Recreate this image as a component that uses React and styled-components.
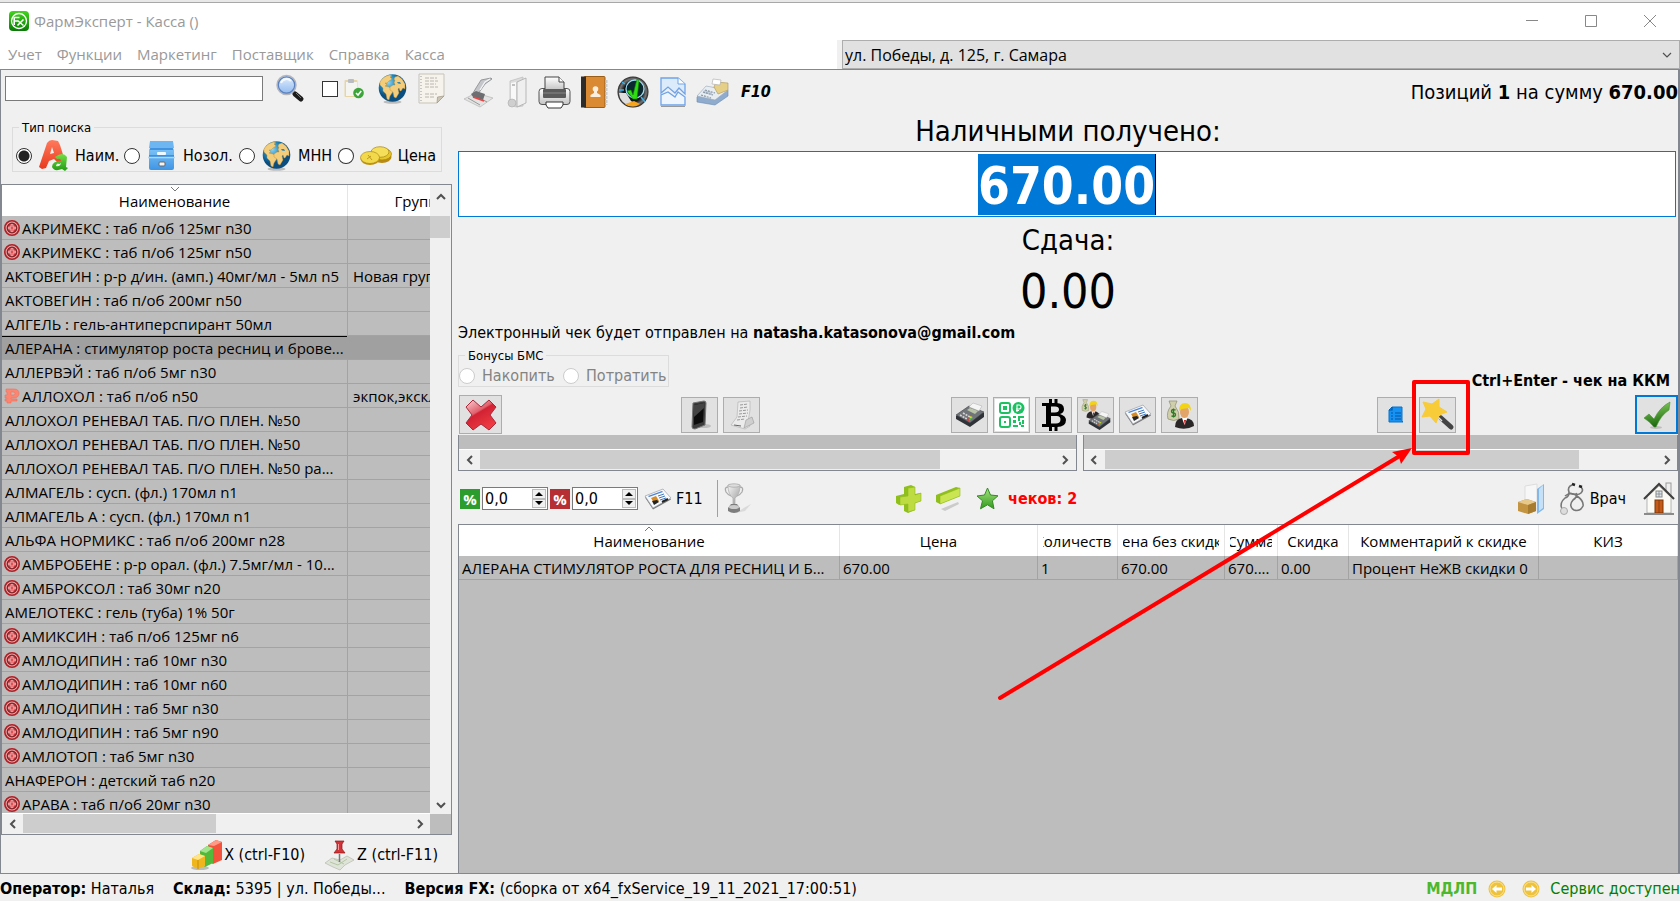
import React from 'react';
import styled, { createGlobalStyle } from 'styled-components';

const UI = '"Open Sans", "Noto Sans", sans-serif';
const TAHOMA = '"DejaVu Sans Condensed", "DejaVu Sans", sans-serif';

const GlobalStyle = createGlobalStyle`
  * { box-sizing: border-box; }
  body { margin: 0; background: #f0f0f0; color: #000; font: 15px/20px ${TAHOMA}; overflow: hidden; }
  button, input, select { font: inherit; color: inherit; margin: 0; }
  svg { display: block; flex: none; overflow: visible; }
`;

/* ---------- window ---------- */
const Window = styled.div`
  display: flex;
  flex-direction: column;
  height: 100vh;
  min-width: 1200px;
  border-top: 2px solid #e8e8e8;
`;
const TitleBar = styled.header`
  display: flex;
  align-items: center;
  height: 38px;
  flex: none;
  padding: 0 1px 2px 9px;
  background: #fff;
  border-top: 1px solid #a8a8a8;
  font: 15px/20px ${UI};
  color: #999;
`;
const Title = styled.h1`
  flex: 1;
  margin: 0 0 0 5px;
  font: inherit;
`;
const WinButton = styled.button`
  display: grid;
  place-items: center;
  width: 59px;
  height: 34px;
  padding: 0;
  border: 0;
  background: none;
`;
const MenuRow = styled.div`
  display: flex;
  flex: none;
  height: 30px;
  background: #fff;
  border-bottom: 1px solid #828790;
`;
const Menu = styled.nav`
  display: flex;
  align-items: center;
  width: 842px;
  padding: 0 0 2px 8px;
  gap: 15px;
`;
const MenuLink = styled.a`
  font: 15px/20px ${UI};
  color: #999;
  text-decoration: none;
`;
const AddressBox = styled.div`
  flex: 1;
  display: flex;
  align-items: center;
  padding-right: 6px;
  background: #e1e1e1;
  border: 1px solid #adadad;
  box-shadow: -5px 0 0 #f0f0f0;
`;
const AddressSelect = styled.select`
  flex: 1;
  padding: 0 2px;
  border: 0;
  appearance: none;
  background: none;
  font: 16px/20px ${UI};
`;
const Main = styled.main`
  flex: 1;
  min-height: 0;
  display: flex;
  border: 1px solid #828790;
  border-top: 0;
  border-right-width: 2px;
`;

/* ---------- left side ---------- */
const Side = styled.section`
  display: flex;
  flex-direction: column;
  width: 451px;
  flex: none;
`;
const SearchRow = styled.form`
  display: flex;
  align-items: center;
  height: 36px;
  padding: 1px 0 0 4px;
  flex: none;
`;
const SearchInput = styled.input`
  width: 258px;
  height: 25px;
  margin-right: 12px;
  border: 1px solid #7a7a7a;
  background: #fff;
`;
const IconButton = styled.button`
  display: flex;
  align-items: center;
  gap: ${(p) => p.$gap || 0}px;
  padding: 0;
  margin-left: ${(p) => p.$left || 0}px;
  border: 0;
  background: none;
  color: #000;
`;
const CheckLabel = styled.label`
  display: flex;
  align-items: center;
  gap: 6px;
  margin: 0 14px 0 17px;
`;
const CheckBox = styled.input`
  appearance: none;
  width: 16px;
  height: 16px;
  border: 1px solid #333;
  background: #fff;
`;
const Group = styled.fieldset`
  display: flex;
  align-items: center;
  position: relative;
  min-width: 0;
  margin: 0;
  padding: 0;
  border: 1px solid #dcdcdc;
`;
const SearchGroup = styled(Group)`
  width: 430px;
  height: 45px;
  flex: none;
  margin: 21px 0 12px 11px;
  padding: 12px 0 0 3px;
`;
const Legend = styled.span`
  position: absolute;
  top: -8px;
  left: 6px;
  padding: 0 3px;
  background: #f0f0f0;
  font: 13px/16px ${TAHOMA};
`;
const Radio = styled.input`
  appearance: none;
  width: 16px;
  height: 16px;
  border: 1px solid #333;
  border-radius: 50%;
  background: #fff;
  &:checked { background: radial-gradient(circle, #222 0 5px, #fff 6px); }
  &:disabled { border-color: #ccc; }
`;
const RadioLabel = styled.label`
  display: flex;
  align-items: center;
  gap: ${(p) => p.$gap}px;
  width: ${(p) => p.$w}px;
  color: ${(p) => (p.$off ? '#838383' : '#000')};
  font: 16px/20px ${TAHOMA};
  white-space: nowrap;
`;
const ListFrame = styled.div`
  flex: 1;
  min-height: 0;
  display: grid;
  grid-template: minmax(0, 1fr) 20px / minmax(0, 1fr) 21px;
  border: 1px solid #828790;
  background: #bdbdbd;
`;
const Clip = styled.div`
  overflow: hidden;
  border-bottom: 1px solid #fff;
`;
const Table = styled.table`
  width: ${(p) => p.$w || '100%'};
  table-layout: fixed;
  border-collapse: separate;
  border-spacing: 0;
  font: 15px/20px ${UI};
`;
const HeadCell = styled.th`
  position: relative;
  height: 31px;
  padding: 1px 5px 0;
  border-right: 1px solid #e5e5e5;
  background: #fff;
  font-weight: 400;
`;
const HeadText = styled.span`
  display: flex;
  justify-content: center;
  overflow: hidden;
  white-space: nowrap;
`;
const SortMark = styled.svg`
  position: absolute;
  top: 1px;
  left: calc(50% - 5px);
`;
const Cell = styled.td`
  height: 24px;
  padding: 0 3px 0 ${(p) => p.$pad || 3}px;
  overflow: hidden;
  white-space: nowrap;
  text-overflow: ellipsis;
  border-right: 1px solid ${(p) => (p.$sel ? '#a0a0a0' : '#a3a3a3')};
  border-bottom: 1px solid #a3a3a3;
  background: ${(p) => (p.$sel ? '#a0a0a0' : '#bdbdbd')};
  box-shadow: ${(p) => (p.$line ? 'inset 0 1px 0 #000' : 'none')};
  svg { display: inline-block; vertical-align: -2px; margin: 0 2px 0 -1px; }
`;
const Bar = styled.div`
  display: flex;
  flex-direction: ${(p) => (p.$v ? 'column' : 'row')};
  background: #f0f0f0;
`;
const BarArrow = styled.button`
  display: grid;
  place-items: center;
  flex: none;
  width: 21px;
  height: ${(p) => (p.$tall ? 31 : 19)}px;
  padding: 0 0 ${(p) => (p.$tall ? 8 : 0)}px;
  border: 0;
  background: none;
`;
const Track = styled.div`
  flex: 1;
`;
const Thumb = styled.div`
  width: ${(p) => p.$w};
  height: ${(p) => p.$h};
  background: #cdcdcd;
`;
const SideFooter = styled.div`
  display: flex;
  justify-content: flex-end;
  align-items: center;
  flex: none;
  height: 38px;
  padding: 2px 14px 0 0;
  gap: 19px;
  font: 16px/20px ${TAHOMA};
`;

/* ---------- right side ---------- */
const Work = styled.section`
  flex: 1;
  min-width: 0;
  display: flex;
  flex-direction: column;
  padding-left: 6px;
`;
const Tools = styled.div`
  display: flex;
  align-items: center;
  height: 44px;
  flex: none;
  padding-left: 5px;
`;
const Tool = styled(IconButton)`
  width: ${(p) => p.$w}px;
  height: 36px;
  flex: none;
`;
const F10 = styled.button`
  padding: 0;
  border: 0;
  background: none;
  font: italic bold 16px/20px ${TAHOMA};
`;
const Total = styled.p`
  margin: 0 0 0 auto;
  font: 20px/24px ${TAHOMA};
`;
const CashLabel = styled.label`
  display: block;
  margin: 0 0 3px;
  text-align: center;
  font: 29px/34px ${TAHOMA};
`;
const CashField = styled.div`
  display: flex;
  justify-content: center;
  align-items: center;
  height: 66px;
  flex: none;
  margin-right: 2px;
  border: 1px solid #0078d7;
  background: #fff;
`;
const CashInput = styled.input`
  width: 178px;
  height: 61px;
  padding: 4px 0 0;
  border: 0;
  border-right: 1px solid #000;
  outline: 0;
  background: #0078d7;
  color: #fff;
  text-align: center;
  font: bold 51px/56px ${TAHOMA};
`;
const ChangeLabel = styled.p`
  margin: 6px 0 4px;
  text-align: center;
  font: 29px/34px ${TAHOMA};
`;
const ChangeValue = styled.output`
  display: block;
  text-align: center;
  font: 48px/60px ${TAHOMA};
`;
const ReceiptNote = styled.p`
  margin: 2px 0 12px;
  font: 16px/20px ${TAHOMA};
`;
const BonusRow = styled.div`
  display: flex;
  justify-content: space-between;
  height: 36px;
  flex: none;
`;
const BonusGroup = styled(Group)`
  width: 211px;
  height: 32px;
  padding: 10px 0 0;
`;
const Hint = styled.strong`
  align-self: flex-end;
  margin-right: 8px;
  font: bold 16px/20px ${TAHOMA};
`;
const ActionRow = styled.div`
  display: flex;
  align-items: center;
  flex: none;
  height: 44px;
  padding: 3px 0 0 1px;
`;
const ActionSet = styled.div`
  display: flex;
  gap: 5px;
  margin-left: ${(p) => p.$left};
`;
const Action = styled.button`
  display: grid;
  place-items: center;
  position: relative;
  flex: none;
  width: ${(p) => (p.$big ? 43 : 37)}px;
  height: ${(p) => (p.$big ? 39 : 36)}px;
  padding: 0;
  border: ${(p) => (p.$main ? '2px solid #0078d7' : '1px solid #adadad')};
  background: ${(p) => (p.$white ? '#fff' : '#e1e1e1')};
  box-shadow: ${(p) => (p.$white ? 'inset 0 0 0 1px #e1e1e1' : 'none')};
`;
const Callout = styled.svg`
  position: absolute;
  z-index: 2;
  top: -18px;
  left: -8px;
  pointer-events: none;
`;
const Scrolls = styled.div`
  display: grid;
  grid-template-columns: 620fr 596fr;
  gap: 6px;
  flex: none;
`;
const ScrollPane = styled.div`
  border: 1px solid #828790;
  border-top: 0;
  height: 36px;
  padding-top: 14px;
  background: #bdbdbd;
`;
const PaneBar = styled(Bar)`
  height: 21px;
  border-top: 1px solid #fff;
`;
const CheckTools = styled.div`
  display: flex;
  align-items: center;
  flex: none;
  height: 53px;
  padding: 2px 3px 0 2px;
  font: 16px/20px ${TAHOMA};
`;
const Percent = styled.label`
  display: grid;
  place-items: center;
  width: 20px;
  height: 20px;
  margin-right: 2px;
  background: ${(p) => p.$c};
  color: #fff;
  font: bold 15px/20px ${UI};
`;
const Spin = styled.div`
  display: flex;
  align-items: center;
  width: 66px;
  height: 23px;
  margin-right: 2px;
  padding: 0 1px 0 2px;
  border: 1px solid #7a7a7a;
  background: #fff;
`;
const SpinInput = styled.input`
  width: 47px;
  padding: 0;
  border: 0;
  background: none;
`;
const SpinKeys = styled.span`
  display: grid;
  width: 14px;
  height: 19px;
`;
const SpinKey = styled.button`
  display: grid;
  place-items: center;
  padding: 0;
  border: 1px solid #bbb;
  background: #f0f0f0;
`;
const Rule = styled.span`
  width: 1px;
  height: 37px;
  margin: 0 6px 0 14px;
  background: #a0a0a0;
`;
const Checks = styled.strong`
  margin-left: 9px;
  color: #f00;
  font: bold 16px/20px ${TAHOMA};
`;
const Pusher = styled.span`
  flex: ${(p) => p.$n};
`;
const CartFrame = styled.div`
  flex: 1;
  min-height: 0;
  overflow: hidden;
  border: 1px solid #828790;
  border-bottom: 0;
  border-right: 0;
  background: #bdbdbd;
`;
const Status = styled.footer`
  display: flex;
  align-items: center;
  flex: none;
  height: 27px;
  padding-top: 3px;
  font: 16px/20px ${TAHOMA};
  white-space: pre;
`;
const StatusItem = styled.span`
  margin-right: 19px;
`;
const StatusEnd = styled.span`
  display: flex;
  align-items: center;
  margin-left: auto;
  color: #008000;
`;
const Mdlp = styled.strong`
  margin-right: 11px;
  color: #4db82e;
`;
const Service = styled.span`
  margin-left: 10px;
`;

/* ---------- icons ---------- */
const Svg = ({ w = 32, h = 32, box = '0 0 32 32', children }) => (
  <svg width={w} height={h} viewBox={box} aria-hidden="true">{children}</svg>
);
const Grad = ({ id, a, b, x2 = 0, y2 = 1 }) => (
  <linearGradient id={id} x1="0" y1="0" x2={x2} y2={y2}><stop stopColor={a} /><stop offset="1" stopColor={b} /></linearGradient>
);
const Chevron = ({ dir, thin }) => {
  const d = { left: 'M8 2 4 6l4 4', right: 'M4 2l4 4-4 4', up: 'M2 8l4-4 4 4', down: 'M2 4l4 4 4-4' }[dir];
  return <Svg w={12} h={12} box="0 0 12 12"><path d={d} fill="none" stroke="#505050" strokeWidth={thin ? 1.2 : 2} /></Svg>;
};
const Logo = () => (
  <Svg w={20} h={20} box="0 0 20 20">
    <defs><Grad id="lg" a="#43d61c" b="#087a05" /></defs>
    <rect width="20" height="20" rx="4" fill="url(#lg)" />
    <circle cx="10" cy="10" r="7.5" fill="none" stroke="#fff" strokeWidth="1.3" />
    <path d="M5.2 14V6.5h5.3M5.2 10h3.6M8.5 9.5l6 5M14.5 8.5l-6 6" fill="none" stroke="#fff" strokeWidth="1.6" />
  </Svg>
);
const Magnifier = () => (
  <Svg w={30} h={30} box="0 0 30 30">
    <defs><Grad id="mg" a="#e4f0ff" b="#8db8ee" /></defs>
    <path d="m17 17 3 3" stroke="#999" strokeWidth="3" />
    <path d="m20 20 6 5" stroke="#1c1c1c" strokeWidth="5" strokeLinecap="round" />
    <path d="m21 19 5 5" stroke="#777" strokeWidth="1" />
    <circle cx="11.5" cy="11" r="9.5" fill="url(#mg)" stroke="#b4b6ba" strokeWidth="1.5" />
    <circle cx="11.5" cy="11" r="8.2" fill="none" stroke="#5a7fbd" strokeWidth="1.2" />
    <path d="M6 9a6 6 0 0 1 10-2" stroke="#fff" strokeWidth="2" fill="none" opacity=".8" />
  </Svg>
);
const ClipboardOk = () => (
  <Svg w={20} h={20} box="0 0 20 20">
    <rect x=".5" y="1" width="13" height="17" rx="1" fill="#e6d6a6" />
    <rect x="2" y="3" width="11" height="14" fill="#f4f4f1" />
    <rect x="4" y="0" width="6" height="4" rx="1" fill="#b9bcc0" />
    <circle cx="14.5" cy="14" r="5.3" fill="#3ba53a" />
    <path d="m12 14 2 2 3.200-4" fill="none" stroke="#fff" strokeWidth="1.6" />
  </Svg>
);
const Globe = ({ id }) => (
  <Svg w={29} h={30} box="0 0 29 30">
    <defs><radialGradient id={id} cx=".35" cy=".3"><stop stopColor="#8fd3f2" /><stop offset=".55" stopColor="#2389bd" /><stop offset="1" stopColor="#0b4f80" /></radialGradient></defs>
    <ellipse cx="14.5" cy="28" rx="9" ry="1.8" fill="#9a9a9a" opacity=".6" />
    <circle cx="14.5" cy="14" r="13.8" fill={`url(#${id})`} />
    <path d="M2 8C4 4 8 1.500 12 1l2 1-2 1 2 2-3 2-2 2h-2l2 2-2 1 4 1 3 2 2 1-2 3-2 3-1 4-2-1-1-5-3-3 0-3-3-3z" fill="#f3cd7c" stroke="#b98a2f" strokeWidth=".4" />
    <path d="m17 3 3-1 4 3 3 5 0 5-2-1-2 3-1 0-1-3-1 1 1 4-3 5-2-1-1-5-3-2 0-3 3-2 2 0-1-3 1-1-1-2z" fill="#f3cd7c" stroke="#b98a2f" strokeWidth=".4" />
    <path d="M19 8h3l1 2-3-.5z" fill="#2b86b5" />
  </Svg>
);
const Note = () => (
  <Svg w={27} h={31} box="0 0 27 31">
    <path d="M1 1h25v22l-7 7H1z" fill="#f6f3ec" stroke="#c6c3ba" />
    <path d="m19 30 .5-6 6.500-1z" fill="#cbc5b5" stroke="#a19a88" strokeWidth=".7" />
    <path d="M7 5h12M7 8h13M7 11h11M7 14h13M7 21h12M7 24h9" stroke="#b9b6ad" strokeWidth="1" strokeDasharray="4 1" />
    <path d="M3 3v25" stroke="#999" strokeDasharray="1 2" />
  </Svg>
);
const Scanner = () => (
  <Svg w={31} h={31} box="0 0 31 31">
    <path d="m1 22 12-6 17 5-13 9z" fill="#e3e3e3" stroke="#b5b5b5" strokeWidth=".7" />
    <path d="m5 21 12 7M11 18l13 7" stroke="#999" strokeWidth="1" />
    <path d="m15 17 7-10 7-5-1-1-10 2-5 8-3 5z" fill="#c4c6c9" stroke="#85888c" strokeWidth=".8" />
    <path d="m8 17 5-3 9 3-2 6-10-3z" fill="#6c6e72" />
    <path d="m10 20 11 4" stroke="#f04040" strokeWidth="1.5" />
    <path d="m17 13 5-8 5-3" stroke="#f5f5f5" strokeWidth="1.3" fill="none" />
  </Svg>
);
const SilverBox = () => (
  <Svg w={21} h={31} box="0 0 21 31">
    <path d="m4 4 13-4v29l-7 1-6-3z" fill="#dcdcdc" stroke="#bbb" strokeWidth=".7" />
    <path d="m11 5 9-4v25l-9 4z" fill="#efefef" stroke="#aaa" strokeWidth=".8" />
    <path d="m5 6 5-1v20l-5 2z" fill="#f8f8f8" />
    <path d="M6 8h3" stroke="#888" />
    <circle cx="6" cy="26" r="4" fill="#cfcfcf" stroke="#aaa" strokeWidth=".6" />
  </Svg>
);
const Printer = () => (
  <Svg w={33} h={33} box="0 0 33 33">
    <defs><Grad id="pr" a="#fff" b="#c4c4c4" /></defs>
    <rect x="1" y="12.5" width="31" height="16" rx="3" fill="url(#pr)" stroke="#555" />
    <path d="M7 14V1h14l5 5v8z" fill="url(#pr)" stroke="#444" />
    <path d="M21 1v5h5" fill="#fff" stroke="#444" />
    <rect x="5" y="13" width="23" height="9" rx="1" fill="#5b5b5b" />
    <path d="M5 17h23" stroke="#888" />
    <path d="M8 26h17v3l-2 3H10l-2-3z" fill="#fff" stroke="#333" />
  </Svg>
);
const Book = () => (
  <Svg w={28} h={32} box="0 0 28 32">
    <rect x="4" y=".5" width="21" height="31" rx="1" fill="#d98a33" stroke="#9a5d18" />
    <rect x="1" y=".5" width="5" height="31" fill="#2e2c2a" />
    <path d="M26.5 4v25" stroke="#c9c9c9" strokeWidth="2" strokeDasharray="3 1" />
    <circle cx="15.5" cy="13" r="2.8" fill="#fbeedd" />
    <path d="M10.5 21v-2l3.500-2v-2h3v2l3.500 2v2z" fill="#fbeedd" />
  </Svg>
);
const Orb = () => (
  <Svg w={32} h={32}>
    <defs><radialGradient id="ob"><stop stopColor="#123" /><stop offset=".6" stopColor="#0d1214" /><stop offset=".85" stopColor="#777" /><stop offset="1" stopColor="#222" /></radialGradient></defs>
    <circle cx="16" cy="16" r="15.5" fill="url(#ob)" />
    <path d="M2 17a14 14 0 0 0 12 13l5-2-5-3-5-8z" fill="#ddd" />
    <path d="M8 28q8 5 15 0l-6-3z" fill="#f7a51c" />
    <circle cx="18" cy="13" r="9" fill="#0b2830" stroke="#9fdcf3" strokeWidth="1.3" />
    <path d="m24 21 4 5M8 8 5 6M2 14h5" stroke="#39b3ef" strokeWidth="1.5" />
    <path d="m10 15 4-1 2 5 4-16 2 2-2 18h-4z" fill="#2fdc12" stroke="#0c8a06" strokeWidth=".6" />
  </Svg>
);
const TornPage = () => (
  <Svg w={26} h={30} box="0 0 26 30">
    <path d="M1 1h17l7 6v10l-6-6-4 5-7-6-7 6z" fill="#dcebfb" stroke="#6fa3e8" strokeWidth="1.3" />
    <path d="M1 28V18l7-3 7 5 3-5 7 5v8z" fill="#eef5fd" stroke="#6fa3e8" strokeWidth="1.3" />
    <path d="M1 29.500h24" stroke="#999" />
    <path d="M18 1v6h7" fill="#fff" stroke="#6fa3e8" />
  </Svg>
);
const Register = () => (
  <Svg w={33} h={28} box="0 0 33 28">
    <path d="m1 19 9-10 22 3v6L19 27 1 24z" fill="#8fabcd" stroke="#6a89b0" strokeWidth=".6" />
    <path d="m1 18 9-10 22 4-13 10z" fill="#e8edf2" stroke="#98a7b8" strokeWidth=".6" />
    <path d="m18 9 2-5 12 1v7l-10 4z" fill="#e6cf86" stroke="#ab9350" strokeWidth=".6" />
    <path d="m16 6 1-5 8 1-1 5z" fill="#fff" stroke="#aaa" strokeWidth=".6" />
    <path d="m8 12 8 2v3l-9-2z" fill="#c3cedb" />
    <path d="m7 14 10 3M9 12l10 3M5 17l10 3" stroke="#8795a5" strokeWidth="1.2" strokeDasharray="2 1" />
  </Svg>
);
const LettersIcon = () => (
  <Svg w={31} h={31} box="0 0 31 31">
    <defs><Grad id="la" a="#ff7a5c" b="#e83a1c" /><Grad id="lb" a="#71e046" b="#249a14" /></defs>
    <path d="M1 27 9 3q2-3 5-3l6 1 2 4 5 16-6 3-5-5-5 2-3 7-4 1zM12 14l4-1-2-6z" fill="url(#la)" fillRule="evenodd" />
    <path d="M17 17q8-6 12 0l-1 10 2 1-3 3-3-2q-8 3-10-2 0-6 9-6 0-3-4-2zM18 26q4 1 5-3-5 0-5 3" fill="url(#lb)" fillRule="evenodd" />
  </Svg>
);
const Cabinet = () => (
  <Svg w={27} h={31} box="0 0 27 31">
    <defs><Grad id="cb" a="#7fc4f8" b="#3f95e4" /></defs>
    <path d="M2 1h23l1 7H1z" fill="#6db6f2" />
    <rect x="1" y="8" width="25" height="22" rx="2" fill="url(#cb)" />
    <path d="M2 9h23M1 16h25" stroke="#2e84d8" strokeWidth="1.5" />
    <path d="M0 17.500h27" stroke="#a8d8fb" strokeWidth="1.5" />
    <rect x="9" y="12" width="9" height="3" rx="1" fill="#eef8ff" />
    <rect x="11" y="22" width="6" height="4" rx="1" fill="#f4f4f4" stroke="#666" />
  </Svg>
);
const Coins = () => (
  <Svg w={32} h={20} box="0 0 32 20">
    <ellipse cx="22" cy="11" rx="9.5" ry="6" fill="#b98b12" />
    <ellipse cx="22" cy="8" rx="9.5" ry="6" fill="#e5c52c" stroke="#a8850f" strokeWidth=".7" />
    <ellipse cx="20" cy="6" rx="9" ry="5.3" fill="#f4de5a" stroke="#a8850f" strokeWidth=".7" />
    <ellipse cx="10" cy="13" rx="9.5" ry="6" fill="#c0920f" />
    <ellipse cx="10" cy="11.5" rx="9.5" ry="6" fill="#f2d94c" stroke="#ae8a12" strokeWidth=".7" />
    <path d="m7 13 4-3m-3-1 4 5" stroke="#bd9a1e" fill="none" />
  </Svg>
);
const RxMark = () => (
  <Svg w={16} h={16} box="0 0 16 16">
    <circle cx="8" cy="8" r="7.2" fill="#e9a9a9" stroke="#b01f26" strokeWidth="1.6" />
    <circle cx="8" cy="8" r="4.8" fill="#c8343a" stroke="#7d2428" strokeWidth="1.2" />
    <path d="M8 4.500v7M4.500 8h7" stroke="#fff" strokeWidth="2.6" />
    <path d="M8 5v6M5 8h6" stroke="#d8252a" strokeWidth="1.2" />
  </Svg>
);
const RubMark = () => (
  <Svg w={16} h={16} box="0 0 16 16">
    <path d="M2 1h8q5 0 5 4.500T9 10H7v1h6v2H7v2H3v-2H1v-2h2v-1H1V7h2V4H2zM7 4v3h2q2 0 2-1.500T9 4z" fill="#fb8571" fillRule="evenodd" stroke="#f0705c" strokeWidth=".6" />
  </Svg>
);
const Cubes = () => (
  <Svg w={31} h={31} box="0 0 31 31">
    <ellipse cx="9" cy="28" rx="9" ry="2" fill="#888" opacity=".5" />
    <path d="m17 5 8-5 6 2v18l-9 4-5-3z" fill="#f4523a" /><path d="m17 5 8-5 6 2-8 4z" fill="#ff9a86" />
    <path d="m9 11 7-5 6 2v15l-8 4-5-3z" fill="#52b93b" /><path d="m9 11 7-5 6 2-7 5z" fill="#a2e48d" />
    <path d="m1 18 7-4 6 2v10l-7 3-6-3z" fill="#f0b61e" /><path d="m1 18 7-4 6 2-7 4z" fill="#ffe486" />
    <path d="M7 20v9" stroke="#c68e0a" />
  </Svg>
);
const PinMap = () => (
  <Svg w={31} h={31} box="0 0 31 31">
    <path d="m1 23 7-5 8 2 7-4 7 4-9 5-5 5-7-3z" fill="#dfe4d8" stroke="#b5b9ae" strokeWidth=".7" />
    <path d="m6 22 8 3 9-6M10 19l10 5" stroke="#b4c6a4" fill="none" />
    <path d="M15.5 14v8" stroke="#777" strokeWidth="1.5" />
    <path d="M11 1h9l-2 3v5l3 4H10l3-4V4z" fill="#d33338" stroke="#8f1518" strokeWidth=".7" />
    <path d="M14.5 4v6" stroke="#f99" />
  </Svg>
);
const RedCross = () => (
  <Svg w={32} h={32}>
    <defs><linearGradient id="rc" x1="0" y1="0" x2=".6" y2="1"><stop stopColor="#f9d3d6" /><stop offset=".45" stopColor="#e0606c" /><stop offset=".5" stopColor="#d22233" /><stop offset="1" stopColor="#ee3a42" /></linearGradient></defs>
    <path d="m8 1 8 7 8-7 7 7-6 8 6 8-7 7-8-6-8 6-7-7 6-8-6-8z" fill="url(#rc)" stroke="#a9283a" strokeLinejoin="round" />
  </Svg>
);
const Phone = () => (
  <Svg w={20} h={30} box="0 0 20 30">
    <ellipse cx="14" cy="26" rx="7" ry="2" fill="#888" opacity=".4" />
    <path d="m3 3 11-2q2 0 2 2l-1 22-10 4q-3 0-3-2z" fill="#3b3b3b" stroke="#777" />
    <path d="m4 5 10-2-1 19-9 3z" fill="#0c0c0c" />
    <path d="m4 5 10-2v5l-10 9z" fill="#444" />
  </Svg>
);
const Sheet = () => (
  <Svg w={27} h={30} box="0 0 27 30">
    <path d="m10 2 12-1 0 9-2 12 2 4-5 3-14-4 6-8z" fill="#ebebeb" stroke="#b5b5b5" strokeWidth=".7" />
    <path d="m12 5 8-1M12 8l8-1M11 11l9-1M11 14l9-1M10 17l9-1M9 20l8-1" stroke="#999" strokeDasharray="3 1" />
    <path d="m16 28 2-8 6-3 2 6z" fill="#cfcfcf" stroke="#999" strokeWidth=".6" />
    <path d="m6 25 7 1" stroke="#666" />
  </Svg>
);
const TerminalShape = () => (
  <g>
    <path d="m1 15 13-9 15 6v4L15 26 1 18z" fill="#2f3236" />
    <path d="m1 14 13-9 15 6-14 11z" fill="#71757a" stroke="#3a3d41" strokeWidth=".6" />
    <path d="m14 6 4-4 9 3-3 5z" fill="#f5f5f5" stroke="#aaa" strokeWidth=".5" />
    <path d="m12 9 3-2 8 3-3 3z" fill="#b9c4a6" />
    <path d="m5 14 7 4M8 12l7 4" stroke="#d5d5d5" strokeWidth="1.5" strokeDasharray="2 1" />
    <path d="m12 18 2 1" stroke="#e33" strokeWidth="2" /><path d="m15 16 2 1" stroke="#ecd324" strokeWidth="2" /><path d="m14 19 3-2" stroke="#3c3" strokeWidth="1.5" />
  </g>
);
const Terminal = () => <Svg w={30} h={28} box="0 0 30 28"><TerminalShape /></Svg>;
const QrPay = () => (
  <Svg w={26} h={26} box="0 0 26 26">
    <g fill="none" stroke="#1cc261" strokeWidth="2"><rect x="1" y="1" width="10" height="10" rx="2" /><rect x="1" y="15" width="10" height="10" rx="2" /></g>
    <path d="M4 4h4v4H4zM5 19h2v2H5zM14 14h3v2h-3zM19 14h6v2h-4v3h-2zM14 18h3v3h-3zM23 18h2v4h-2zM14 23h5v2h-5zM20 20h2v3h-2zM22 23h3v2h-3z" fill="#1cc261" />
    <circle cx="19.5" cy="6" r="6" fill="#1cc261" />
    <path d="M18 10V3h2q2 0 2 2t-2 2h-3M17 8.500h3" stroke="#fff" strokeWidth="1.1" fill="none" />
  </Svg>
);
const Bitcoin = () => (
  <Svg w={24} h={32} box="0 0 24 32">
    <path d="M0 4h14q8 0 8 6 0 4-4 5 6 2 6 6 0 7-9 7H0v-3h4V7H0zM9 7.500v6h4q4 0 4-3t-4-3zM9 17v7.500h5q4.500 0 4.500-4T14 17z" fill="#000" fillRule="evenodd" />
    <path d="M7 0h3v5H7zM12.5 0h3v5h-3zM7 27h3v5H7zM12.5 27h3v5h-3z" />
  </Svg>
);
const Bag = () => (
  <g>
    <path d="M3 1h8L9 6q5 6 4 13-5 3-11 0Q0 12 5 6z" fill="#cfcfab" stroke="#8d8d6b" strokeWidth=".7" />
    <path d="M9.5 10q-4-1-4 1t2 2 2 2-4 1M7.500 8.500v9" stroke="#2f7a28" strokeWidth="1.3" fill="none" />
  </g>
);
const Man = () => (
  <g>
    <path d="M5 25q0-8 7-9h4q8 1 8 8-9 5-19 1z" fill="#2a2526" />
    <path d="m12 16 2.500 7 3-7z" fill="#fff" /><path d="m14 18 1 6 1-6z" fill="#c11" />
    <ellipse cx="14.5" cy="10" rx="4.5" ry="6" fill="#e2a469" />
    <path d="M9 9q0-8 6-8t6 8l-2-3-7 1z" fill="#f2d414" />
  </g>
);
const ManBag = () => (
  <Svg w={28} h={30} box="0 0 28 30"><Bag /><g transform="translate(4 2)"><Man /></g></Svg>
);
const ManTerminal = () => (
  <Svg w={30} h={31} box="0 0 30 31">
    <g transform="scale(.6)"><Bag /></g><g transform="translate(2 1) scale(.7)"><Man /></g>
    <g transform="translate(7 11) scale(.77)"><TerminalShape /></g>
  </Svg>
);
const Card = () => (
  <Svg w={28} h={22} box="0 0 28 22">
    <path d="m1 8 18-7 8 9-18 10z" fill="#777" transform="translate(0 1.5)" />
    <path d="m1 8 18-7 8 9-18 10z" fill="#f6f8fa" stroke="#9a9fa6" strokeWidth=".7" />
    <path d="m4 8 14-5 1 1-14 5z" fill="#4c83d6" />
    <path d="m7 10 5-2 3 5-5 2z" fill="#d98a20" /><path d="m8 13 5-1 2 2-5 3z" fill="#222" />
    <path d="m14 8 6-2M15 10l6-2M16 12l6-2" stroke="#4378bd" />
    <path d="m18 14 6-3" stroke="#222" strokeWidth="2" />
  </Svg>
);
const BlueList = () => (
  <Svg w={16} h={18} box="0 0 16 18">
    <path d="M4 1h10v14l1 1H1V4z" fill="#1593f5" stroke="#0873cc" />
    <path d="M1 4h3V1M3 7h2M7 7h6M3 10h2M7 10h6M3 13h2M7 13h6" stroke="#07539c" strokeWidth="1.2" fill="none" />
  </Svg>
);
const Wand = () => (
  <Svg w={32} h={32}>
    <path d="m19 19 10 9" stroke="#444" strokeWidth="5" strokeLinecap="round" />
    <path d="m16 18 4 4" stroke="#e1e1e1" strokeWidth="1.5" />
    <path d="m17 0 0 8 8 5-8 3-3 8-6-7-8 1 4-8L1 3l9 2z" fill="#f8cb38" stroke="#f8cb38" strokeLinejoin="round" />
  </Svg>
);
const GreenTick = () => (
  <Svg w={28} h={28} box="0 0 28 28">
    <defs><Grad id="gt" a="#8ed562" b="#1c6a10" x2=".2" /></defs>
    <ellipse cx="13" cy="26.5" rx="6" ry="1.5" fill="#999" opacity=".5" />
    <path d="m1 17 5-4 5 5Q17 6 27 1l-1 8Q18 14 13 26h-2Q6 20 1 17z" fill="url(#gt)" stroke="#43912d" strokeWidth=".6" />
  </Svg>
);
const Cup = () => (
  <Svg w={28} h={31} box="0 0 28 31">
    <defs><Grad id="cu" a="#f6f6f6" b="#999" x2="1" /></defs>
    <path d="M12 30q9-6 15-9l-6 7z" fill="#ccc" opacity=".6" />
    <path d="M4 4Q0 4 2 9q2 3 5 4M16 4q4 0 2 5-2 3-5 4" fill="none" stroke="#aaa" strokeWidth="1.3" />
    <path d="M4 2h12q0 10-5 13v6H9v-6Q4 12 4 2z" fill="url(#cu)" stroke="#aaa" strokeWidth=".7" />
    <ellipse cx="10" cy="2.5" rx="6" ry="1.7" fill="#ddd" stroke="#999" strokeWidth=".6" />
    <path d="M7 21h6l3 4v3q-6 4-12 0v-3z" fill="#7d7d7d" /><ellipse cx="10" cy="24" rx="5" ry="2" fill="#ccc" />
  </Svg>
);
const Plus = () => (
  <Svg w={26} h={28} box="0 0 26 28">
    <path d="M8 2 15 0l4 2v7l6-1v8l-6 2v7l-7 3-4-2v-7l-5 1-3-2v-7l8-2z" fill="#8fbf1d" />
    <path d="m12 3 7-1v8l6-2v8l-6 2v7l-7 2v-8l-8 1v-8l8-1z" fill="#bcdc42" stroke="#93b822" strokeWidth=".6" />
  </Svg>
);
const Minus = () => (
  <Svg w={27} h={27} box="0 0 27 27">
    <path d="m6 24 17-7 1 2-14 7z" fill="#bbb" opacity=".7" />
    <path d="m1 10 20-8 4 1v8L5 19l-4-2z" fill="#8fbf1d" />
    <path d="m5 11 20-8v8L5 19z" fill="#c9e552" stroke="#93b822" strokeWidth=".6" />
  </Svg>
);
const Star = () => (
  <Svg w={23} h={23} box="0 0 23 23">
    <defs><Grad id="st" a="#a6e37e" b="#319a1d" /></defs>
    <path d="m11.5 1 3 7 7.500.8-5.600 5 1.600 8-6.500-4-7 4 2-8L1 9l7.500-1z" fill="url(#st)" stroke="#348b23" />
  </Svg>
);
const BoxFolder = () => (
  <Svg w={28} h={32} box="0 0 28 32">
    <path d="M8 3 20 1v25H8z" fill="#f7f7f7" stroke="#ddd" /><path d="m20 6 7-5v25l-7 5z" fill="#84b8e6" /><path d="m22 6 4-4v23l-4 3z" fill="#c6e1f7" />
    <path d="m1 19 9-3 9 3v9l-8 3-10-3z" fill="#c39543" /><path d="m1 19 9-3 9 3-8 3z" fill="#e8c98c" /><path d="m11 22 8-3v9l-8 3z" fill="#a87c2e" />
  </Svg>
);
const Stethoscope = () => (
  <Svg w={26} h={32} box="0 0 26 32">
    <g fill="none" stroke="#777" strokeWidth="1.6"><path d="M13 2Q8 4 10 9q0 5-4 6Q0 20 3 26" /><path d="M22 4q3 3 0 6-3 3-12 0" /><path d="M6 13q6-5 12 0 7 5 6 10-3 6-9 4-6-4-1-10 5-3 3-7" /></g>
    <path d="m13 1 3 1M20 3l3 1" stroke="#222" strokeWidth="2.5" /><circle cx="5" cy="28" r="3.5" fill="#ddd" stroke="#aaa" />
  </Svg>
);
const House = () => (
  <Svg w={32} h={33} box="0 0 32 33">
    <rect x="23" y="1" width="5" height="13" fill="#eee" stroke="#999" />
    <path d="M4 15 16 4l12 11v16H4z" fill="#fbfaf5" stroke="#999" strokeWidth=".7" />
    <path d="M1 17 16 2l15 15" fill="none" stroke="#3d3d3d" strokeWidth="2" />
    <rect x="13" y="9" width="6" height="6" fill="#dde6ee" stroke="#888" /><path d="M16 9v6M13 12h6" stroke="#888" strokeWidth=".8" />
    <rect x="12" y="18" width="8" height="13" fill="#c45a17" stroke="#7d3507" /><path d="M16 18v13" stroke="#7d3507" strokeWidth=".7" />
    <path d="M1 32h30" stroke="#8a8a8a" strokeWidth="2" />
  </Svg>
);
const ArrowDisc = ({ flip }) => (
  <Svg w={18} h={18} box="0 0 18 18">
    <circle cx="9" cy="9" r="8.5" fill="#efc23c" /><circle cx="9" cy="9" r="7" fill="none" stroke="#f8e29c" />
    <path d={flip ? 'M14 9 9.500 5v2.500H4v3h5.500V13z' : 'M4 9l4.500-4v2.500H14v3H8.500V13z'} fill="#fff" />
  </Svg>
);

/* ---------- data ---------- */
const DRUGS = [
  ['АКРИМЕКС : таб п/об 125мг n30', 'rx'],
  ['АКРИМЕКС : таб п/об 125мг n50', 'rx'],
  ['АКТОВЕГИН : р-р д/ин. (амп.) 40мг/мл - 5мл n5', '', 'Новая группа'],
  ['АКТОВЕГИН : таб п/об 200мг n50'],
  ['АЛГЕЛЬ : гель-антиперспирант 50мл'],
  ['АЛЕРАНА : стимулятор роста ресниц и брове...'],
  ['АЛЛЕРВЭЙ : таб п/об 5мг n30'],
  ['АЛЛОХОЛ : таб п/об n50', 'rub', 'экпок,эксклюзив'],
  ['АЛЛОХОЛ РЕНЕВАЛ ТАБ. П/О ПЛЕН. №50'],
  ['АЛЛОХОЛ РЕНЕВАЛ ТАБ. П/О ПЛЕН. №50'],
  ['АЛЛОХОЛ РЕНЕВАЛ ТАБ. П/О ПЛЕН. №50 ра...'],
  ['АЛМАГЕЛЬ : сусп. (фл.) 170мл n1'],
  ['АЛМАГЕЛЬ А : сусп. (фл.) 170мл n1'],
  ['АЛЬФА НОРМИКС : таб п/об 200мг n28'],
  ['АМБРОБЕНЕ : р-р орал. (фл.) 7.5мг/мл - 10...', 'rx'],
  ['АМБРОКСОЛ : таб 30мг n20', 'rx'],
  ['АМЕЛОТЕКС : гель (туба) 1% 50г'],
  ['АМИКСИН : таб п/об 125мг n6', 'rx'],
  ['АМЛОДИПИН : таб 10мг n30', 'rx'],
  ['АМЛОДИПИН : таб 10мг n60', 'rx'],
  ['АМЛОДИПИН : таб 5мг n30', 'rx'],
  ['АМЛОДИПИН : таб 5мг n90', 'rx'],
  ['АМЛОТОП : таб 5мг n30', 'rx'],
  ['АНАФЕРОН : детский таб n20'],
  ['АРАВА : таб п/об 20мг n30', 'rx'],
];
const SELECTED = 5;
const CART = [
  ['Наименование', 381, 'АЛЕРАНА СТИМУЛЯТОР РОСТА ДЛЯ РЕСНИЦ И Б...'],
  ['Цена', 198, '670.00'],
  ['Количество', 80, '1'],
  ['Цена без скидки', 107, '670.00'],
  ['Сумма', 53, '670....'],
  ['Скидка', 71, '0.00'],
  ['Комментарий к скидке', 190, 'Процент НеЖВ скидки 0'],
  ['КИЗ', null, ''],
];
const TOOLS = [
  ['Сканер', 43, Scanner], ['Упаковка', 32, SilverBox], ['Печать', 42, Printer], ['Контакты', 37, Book],
  ['Проверка', 43, Orb], ['Разрыв чека', 36, TornPage], ['Касса', 45, Register],
];

const HScroll = ({ frame: Frame = Bar, size }) => (
  <Frame>
    <BarArrow type="button" aria-label="Влево"><Chevron dir="left" /></BarArrow>
    <Track><Thumb $w={size} $h="19px" /></Track>
    <BarArrow type="button" aria-label="Вправо"><Chevron dir="right" /></BarArrow>
  </Frame>
);
const Sort = ({ down }) => (
  <SortMark width="10" height="6" viewBox="0 0 10 6">
    <path d={down ? 'M1 1l4 4 4-4' : 'M1 5l4-4 4 4'} fill="none" stroke="#777" />
  </SortMark>
);
const PercentField = ({ id, color }) => (
  <>
    <Percent htmlFor={id} $c={color}>%</Percent>
    <Spin>
      <SpinInput id={id} defaultValue="0,0" />
      <SpinKeys>
        <SpinKey type="button" aria-label="Больше"><Svg w={8} h={4} box="0 0 8 4"><path d="M0 4 4 0l4 4z" /></Svg></SpinKey>
        <SpinKey type="button" aria-label="Меньше"><Svg w={8} h={4} box="0 0 8 4"><path d="M0 0l4 4 4-4z" /></Svg></SpinKey>
      </SpinKeys>
    </Spin>
  </>
);

export default function App() {
  return (
    <Window>
      <GlobalStyle />
      <TitleBar>
        <Logo />
        <Title>ФармЭксперт - Касса ()</Title>
        <WinButton aria-label="Свернуть"><Svg w={12} h={12} box="0 0 12 12"><path d="M0 5.500h12" stroke="#888" /></Svg></WinButton>
        <WinButton aria-label="Развернуть"><Svg w={12} h={12} box="0 0 12 12"><path d="M.5.5h11v11H.5z" fill="none" stroke="#888" /></Svg></WinButton>
        <WinButton aria-label="Закрыть"><Svg w={12} h={12} box="0 0 12 12"><path d="m0 0 12 12M12 0 0 12" stroke="#888" /></Svg></WinButton>
      </TitleBar>
      <MenuRow>
        <Menu>
          {['Учет', 'Функции', 'Маркетинг', 'Поставщик', 'Справка', 'Касса'].map((m) => <MenuLink href="#" key={m}>{m}</MenuLink>)}
        </Menu>
        <AddressBox>
          <AddressSelect aria-label="Адрес"><option>ул. Победы, д. 125, г. Самара</option></AddressSelect>
          <Chevron dir="down" thin />
        </AddressBox>
      </MenuRow>
      <Main>
        <Side>
          <SearchRow>
            <SearchInput aria-label="Поиск" />
            <IconButton type="button" aria-label="Найти"><Magnifier /></IconButton>
            <CheckLabel><CheckBox type="checkbox" aria-label="В наличии" /><ClipboardOk /></CheckLabel>
            <IconButton type="button" aria-label="Интернет"><Globe id="g1" /></IconButton>
            <IconButton type="button" aria-label="Заметка" $left={11}><Note /></IconButton>
          </SearchRow>
          <SearchGroup role="radiogroup" aria-label="Тип поиска">
            <Legend>Тип поиска</Legend>
            <RadioLabel $gap={6} $w={108}><Radio type="radio" name="kind" defaultChecked /><LettersIcon />Наим.</RadioLabel>
            <RadioLabel $gap={8} $w={115}><Radio type="radio" name="kind" /><Cabinet />Нозол.</RadioLabel>
            <RadioLabel $gap={7} $w={99}><Radio type="radio" name="kind" /><Globe id="g2" />МНН</RadioLabel>
            <RadioLabel $gap={6} $w={98}><Radio type="radio" name="kind" /><Coins />Цена</RadioLabel>
          </SearchGroup>
          <ListFrame>
            <Clip>
              <Table $w="546px">
                <colgroup><col width="346" /><col width="200" /></colgroup>
                <thead><tr>
                  <HeadCell><Sort down /><HeadText>Наименование</HeadText></HeadCell>
                  <HeadCell><HeadText>Группа товара</HeadText></HeadCell>
                </tr></thead>
                <tbody>
                  {DRUGS.map(([name, mark, group], i) => (
                    <tr key={i}>
                      <Cell $sel={i === SELECTED} $line={i === SELECTED}>
                        {mark === 'rx' && <RxMark />}{mark === 'rub' && <RubMark />}{name}
                      </Cell>
                      <Cell $sel={i === SELECTED} $pad={5}>{group}</Cell>
                    </tr>
                  ))}
                </tbody>
              </Table>
            </Clip>
            <Bar $v>
              <BarArrow $tall type="button" aria-label="Вверх"><Chevron dir="up" /></BarArrow>
              <Track><Thumb $w="20px" $h="22px" /></Track>
              <BarArrow type="button" aria-label="Вниз"><Chevron dir="down" /></BarArrow>
            </Bar>
            <HScroll size="50%" />
          </ListFrame>
          <SideFooter>
            <IconButton $gap={2}><Cubes />X (ctrl-F10)</IconButton>
            <IconButton $gap={2}><PinMap />Z (ctrl-F11)</IconButton>
          </SideFooter>
        </Side>
        <Work>
          <Tools>
            {TOOLS.map(([label, w, Icon]) => <Tool key={label} aria-label={label} $w={w}><Icon /></Tool>)}
            <F10>F10</F10>
            <Total>Позиций <b>1</b> на сумму <b>670.00</b></Total>
          </Tools>
          <CashLabel htmlFor="cash">Наличными получено:</CashLabel>
          <CashField><CashInput id="cash" defaultValue="670.00" /></CashField>
          <ChangeLabel>Сдача:</ChangeLabel>
          <ChangeValue>0.00</ChangeValue>
          <ReceiptNote>Электронный чек будет отправлен на <b>natasha.katasonova@gmail.com</b></ReceiptNote>
          <BonusRow>
            <BonusGroup role="radiogroup" aria-label="Бонусы БМС">
              <Legend>Бонусы БМС</Legend>
              <RadioLabel $gap={7} $w={104} $off><Radio type="radio" name="bonus" disabled />Накопить</RadioLabel>
              <RadioLabel $gap={7} $w={104} $off><Radio type="radio" name="bonus" disabled />Потратить</RadioLabel>
            </BonusGroup>
            <Hint>Ctrl+Enter - чек на ККМ</Hint>
          </BonusRow>
          <ActionRow>
            <Action $big aria-label="Отмена"><RedCross /></Action>
            <ActionSet $left="179px">
              <Action aria-label="Телефон"><Phone /></Action>
              <Action aria-label="Документ"><Sheet /></Action>
            </ActionSet>
            <Pusher $n={191} />
            <ActionSet>
              <Action aria-label="Терминал"><Terminal /></Action>
              <Action aria-label="Оплата по QR" $white><QrPay /></Action>
              <Action aria-label="Биткоин"><Bitcoin /></Action>
              <Action aria-label="Смешанная оплата"><ManTerminal /></Action>
              <Action aria-label="Карта"><Card /></Action>
              <Action aria-label="Кредит"><ManBag /></Action>
            </ActionSet>
            <Pusher $n={179} />
            <ActionSet>
              <Action aria-label="Список"><BlueList /></Action>
              <Action aria-label="Подбор">
                <Wand />
                <Callout width="59" height="76" viewBox="0 0 59 76" fill="none">
                  <path d="M2 2h54v71H2z" stroke="#f00" strokeWidth="4" strokeLinejoin="round" />
                  <path d="M-412 318-14 77" stroke="#f00" strokeWidth="4" strokeLinecap="round" />
                  <path d="m0 68-20 4 7 5 2 7z" fill="#f00" />
                </Callout>
              </Action>
            </ActionSet>
            <ActionSet $left="179px"><Action $big $main aria-label="Чек на ККМ"><GreenTick /></Action></ActionSet>
          </ActionRow>
          <Scrolls>
            <ScrollPane><HScroll frame={PaneBar} size="80%" /></ScrollPane>
            <ScrollPane><HScroll frame={PaneBar} size="86%" /></ScrollPane>
          </Scrolls>
          <CheckTools>
            <PercentField id="p1" color="#2c9c2e" />
            <PercentField id="p2" color="#b62f33" />
            <IconButton $left={4} $gap={4}><Card />F11</IconButton>
            <Rule />
            <IconButton aria-label="Награда"><Cup /></IconButton>
            <Pusher $n={144} />
            <IconButton aria-label="Добавить"><Plus /></IconButton>
            <IconButton $left={13} aria-label="Убрать"><Minus /></IconButton>
            <IconButton $left={14} aria-label="Избранное"><Star /></IconButton>
            <Checks>чеков: 2</Checks>
            <Pusher $n={438} />
            <IconButton aria-label="Товары"><BoxFolder /></IconButton>
            <IconButton $left={14} $gap={5}><Stethoscope />Врач</IconButton>
            <IconButton $left={17} aria-label="Домой"><House /></IconButton>
          </CheckTools>
          <CartFrame>
            <Table>
              <colgroup>{CART.map(([t, w]) => <col key={t} width={w || undefined} />)}</colgroup>
              <thead><tr>
                {CART.map(([t], i) => <HeadCell key={t}>{i === 0 && <Sort />}<HeadText>{t}</HeadText></HeadCell>)}
              </tr></thead>
              <tbody><tr>{CART.map(([t, , v]) => <Cell key={t}>{v}</Cell>)}</tr></tbody>
            </Table>
          </CartFrame>
        </Work>
      </Main>
      <Status>
        <StatusItem><b>Оператор:</b> Наталья</StatusItem>
        <StatusItem><b>Склад:</b> 5395 | ул. Победы...</StatusItem>
        <StatusItem><b>Версия FX:</b> (сборка от x64_fxService_19_11_2021_17:00:51)</StatusItem>
        <StatusEnd>
          <Mdlp>МДЛП</Mdlp>
          <IconButton aria-label="Назад"><ArrowDisc /></IconButton>
          <IconButton $left={16} aria-label="Вперёд"><ArrowDisc flip /></IconButton>
          <Service>Сервис доступен</Service>
        </StatusEnd>
      </Status>
    </Window>
  );
}
